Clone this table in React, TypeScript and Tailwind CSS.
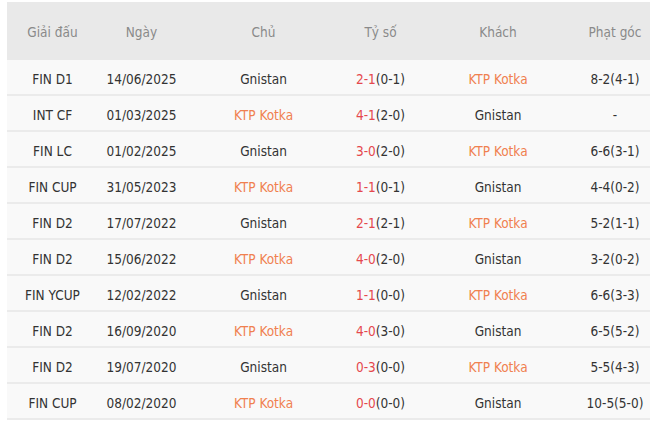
const COLS = ["w-[91px]", "w-[87px]", "w-[157px]", "w-[77px]", "w-[158px]", "w-[76px]"];

type Match = {
  league: string;
  date: string;
  home: string;
  score: string;
  half: string;
  away: string;
  corner: string;
};

const MATCHES: Match[] = [
  { league: "FIN D1", date: "14/06/2025", home: "Gnistan", score: "2-1", half: "(0-1)", away: "KTP Kotka", corner: "8-2(4-1)" },
  { league: "INT CF", date: "01/03/2025", home: "KTP Kotka", score: "4-1", half: "(2-0)", away: "Gnistan", corner: "-" },
  { league: "FIN LC", date: "01/02/2025", home: "Gnistan", score: "3-0", half: "(2-0)", away: "KTP Kotka", corner: "6-6(3-1)" },
  { league: "FIN CUP", date: "31/05/2023", home: "KTP Kotka", score: "1-1", half: "(0-1)", away: "Gnistan", corner: "4-4(0-2)" },
  { league: "FIN D2", date: "17/07/2022", home: "Gnistan", score: "2-1", half: "(2-1)", away: "KTP Kotka", corner: "5-2(1-1)" },
  { league: "FIN D2", date: "15/06/2022", home: "KTP Kotka", score: "4-0", half: "(2-0)", away: "Gnistan", corner: "3-2(0-2)" },
  { league: "FIN YCUP", date: "12/02/2022", home: "Gnistan", score: "1-1", half: "(0-0)", away: "KTP Kotka", corner: "6-6(3-3)" },
  { league: "FIN D2", date: "16/09/2020", home: "KTP Kotka", score: "4-0", half: "(3-0)", away: "Gnistan", corner: "6-5(5-2)" },
  { league: "FIN D2", date: "19/07/2020", home: "Gnistan", score: "0-3", half: "(0-0)", away: "KTP Kotka", corner: "5-5(4-3)" },
  { league: "FIN CUP", date: "08/02/2020", home: "KTP Kotka", score: "0-0", half: "(0-0)", away: "Gnistan", corner: "10-5(5-0)" },
];

function Team({ name }: { name: string }) {
  const kotka = name === "KTP Kotka";
  return <span className={kotka ? "text-[#f0804f]" : "text-[#333]"}>{name}</span>;
}

export default function App() {
  const headers = ["Giải đấu", "Ngày", "Chủ", "Tỷ số", "Khách", "Phạt góc"];

  return (
    <div
      className="h-[434px] w-[650px] overflow-hidden bg-white pl-[7px] pt-[2px] text-[13.5px]"
      style={{ fontFamily: '"DejaVu Sans Condensed", "Liberation Sans", sans-serif' }}
    >
      <div className="w-[668px]">
        <div className="flex h-[58px] items-center bg-[#e9e9e9] pt-[3px] text-[#8a8a8a]">
          {headers.map((h, i) => (
            <div key={h} className={`${COLS[i]} shrink-0 whitespace-nowrap text-center`}>
              {h}
            </div>
          ))}
        </div>
        {MATCHES.map((m, idx) => (
          <div
            key={idx}
            className="flex h-[36px] items-center border-b-2 border-[#ebebeb] bg-[#f9f9f9] pt-[4px] text-[#333]"
          >
            <div className={`${COLS[0]} shrink-0 whitespace-nowrap text-center`}>{m.league}</div>
            <div className={`${COLS[1]} shrink-0 whitespace-nowrap text-center`}>{m.date}</div>
            <div className={`${COLS[2]} shrink-0 whitespace-nowrap text-center`}>
              <Team name={m.home} />
            </div>
            <div className={`${COLS[3]} shrink-0 whitespace-nowrap text-center`}>
              <span className="text-[#e5484d]">{m.score}</span>
              {m.half}
            </div>
            <div className={`${COLS[4]} shrink-0 whitespace-nowrap text-center`}>
              <Team name={m.away} />
            </div>
            <div className={`${COLS[5]} shrink-0 whitespace-nowrap text-center`}>{m.corner}</div>
          </div>
        ))}
      </div>
    </div>
  );
}
